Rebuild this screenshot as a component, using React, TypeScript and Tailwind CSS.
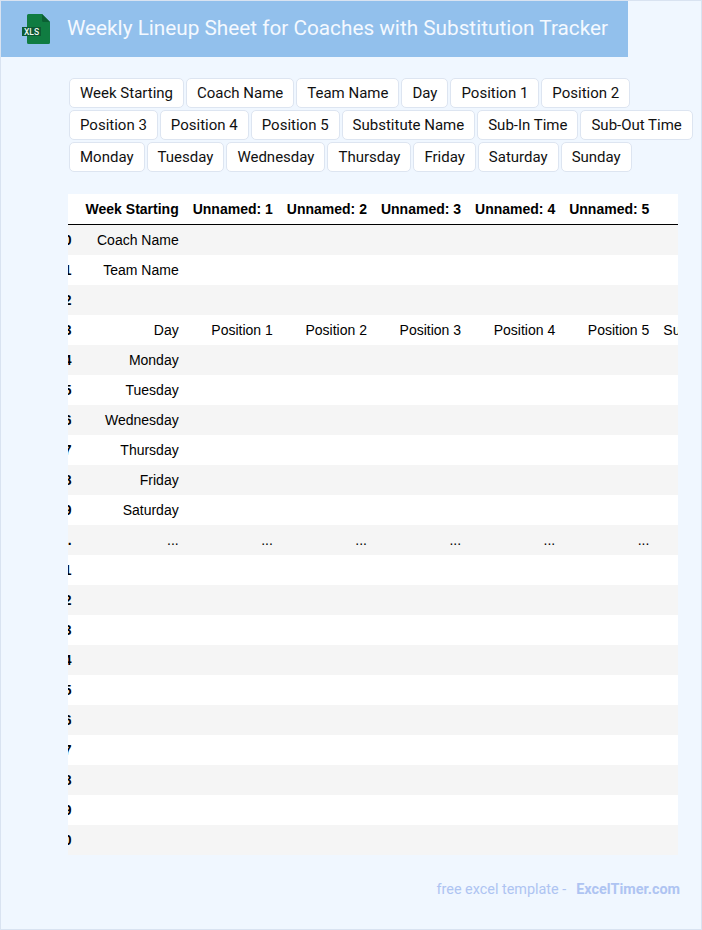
const CHIPS = [
  'Week Starting',
  'Coach Name',
  'Team Name',
  'Day',
  'Position 1',
  'Position 2',
  'Position 3',
  'Position 4',
  'Position 5',
  'Substitute Name',
  'Sub-In Time',
  'Sub-Out Time',
  'Monday',
  'Tuesday',
  'Wednesday',
  'Thursday',
  'Friday',
  'Saturday',
  'Sunday',
];

const HEADERS = [
  'Week Starting',
  'Unnamed: 1',
  'Unnamed: 2',
  'Unnamed: 3',
  'Unnamed: 4',
  'Unnamed: 5',
  'Unnamed: 6',
  'Unnamed: 7',
  'Unnamed: 8',
];

const blank = (label: string) => [label, '', '', '', '', '', '', '', ''];
const dots = Array(9).fill('...');

const ROWS: { index: string; cells: string[] }[] = [
  { index: '0', cells: blank('Coach Name') },
  { index: '1', cells: blank('Team Name') },
  { index: '2', cells: blank('') },
  {
    index: '3',
    cells: [
      'Day',
      'Position 1',
      'Position 2',
      'Position 3',
      'Position 4',
      'Position 5',
      'Substitute Name',
      'Sub-In Time',
      'Sub-Out Time',
    ],
  },
  { index: '4', cells: blank('Monday') },
  { index: '5', cells: blank('Tuesday') },
  { index: '6', cells: blank('Wednesday') },
  { index: '7', cells: blank('Thursday') },
  { index: '8', cells: blank('Friday') },
  { index: '9', cells: blank('Saturday') },
  { index: '...', cells: dots },
  ...['21', '22', '23', '24', '25', '26', '27', '28', '29', '30'].map((index) => ({
    index,
    cells: blank(''),
  })),
];

function XlsIcon() {
  return (
    <svg width="31" height="32" viewBox="0 -1 31 32" className="shrink-0">
      <path
        d="M8 1.5a1.5 1.5 0 0 1 1.5-1.5H23l8 8v20.5a1.5 1.5 0 0 1-1.5 1.5h-20A1.5 1.5 0 0 1 8 28.5z"
        fill="#107c41"
      />
      <path d="M23 0l8 8h-6.5A1.5 1.5 0 0 1 23 6.5z" fill="#0b5f33" />
      <rect x="3" y="13" width="19" height="9" fill="#0c5a33" />
      <text
        x="12.5"
        y="20.6"
        textAnchor="middle"
        fill="#eef8f2"
        fontSize="8.5"
        fontWeight="500"
        fontFamily="Roboto, sans-serif"
      >
        XLS
      </text>
    </svg>
  );
}

export default function App() {
  return (
    <div className="relative h-[930px] w-[702px] overflow-hidden border border-[#d9e3f1] bg-[#f0f7ff] font-['Roboto',sans-serif]">
      <header className="flex h-[56px] w-[627px] items-center bg-[#92c0ec] pl-[18px]">
        <XlsIcon />
        <h1 className="ml-[17px] whitespace-nowrap text-[20.75px] font-normal text-[#f4f9ff]">
          Weekly Lineup Sheet for Coaches with Substitution Tracker
        </h1>
      </header>

      <div className="ml-[68px] mt-[21px] flex w-[632px] flex-wrap gap-x-[2px] gap-y-[2px]">
        {CHIPS.map((chip) => (
          <span
            key={chip}
            className="h-[30px] rounded-[5px] border border-[#dde5f1] bg-white px-[10px] text-[15px] leading-[28px] whitespace-nowrap text-[#111]"
          >
            {chip}
          </span>
        ))}
      </div>

      <div className="ml-[67px] mt-[22px] w-[610px] overflow-hidden bg-white font-['Liberation_Sans',sans-serif] text-[14px] text-black">
        <table className="-ml-[19px] border-separate border-spacing-0 text-right whitespace-nowrap">
          <thead>
            <tr className="h-[31px]">
              <th className="border-b border-black px-[7px] font-bold" />
              {HEADERS.map((h) => (
                <th key={h} className="border-b border-black px-[7px] text-right font-bold">
                  {h}
                </th>
              ))}
            </tr>
          </thead>
          <tbody>
            {ROWS.map((row, i) => (
              <tr key={row.index} className={i % 2 === 0 ? 'h-[30px] bg-[#f5f5f5]' : 'h-[30px] bg-white'}>
                <th className="px-[7px] text-right font-bold">{row.index}</th>
                {row.cells.map((cell, c) => (
                  <td key={c} className="px-[7px]">
                    {cell}
                  </td>
                ))}
              </tr>
            ))}
          </tbody>
        </table>
      </div>

      <footer className="mt-[25px] flex justify-end pr-[21px] text-[14.4px] leading-[20px] text-[#aec4f2]">
        <span>free excel template -</span>
        <span className="ml-[10px] font-bold">ExcelTimer.com</span>
      </footer>
    </div>
  );
}
